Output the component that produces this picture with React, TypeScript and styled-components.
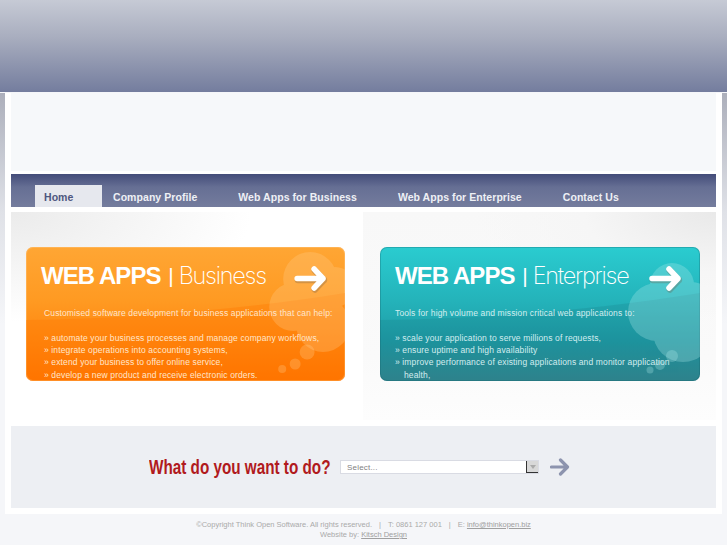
import React from "react";
import styled, { createGlobalStyle } from "styled-components";

const Global = createGlobalStyle`
  html, body { margin: 0; padding: 0; background: #f5f6f9; }
  body { font-family: "Liberation Sans", Arial, sans-serif; overflow: hidden; }
  * { box-sizing: border-box; }
`;

const Page = styled.div`
  width: 727px;
  height: 545px;
  overflow: hidden;
  display: flex;
  flex-direction: column;
`;
const Header = styled.header`
  height: 92px;
  flex: none;
  background: linear-gradient(180deg, #c6cad5 0%, #a9aebf 40%, #747d9e 100%);
`;
const Rail = styled.div`
  flex: none;
  margin-top: 1px;
  padding: 0 5px;
  background: linear-gradient(180deg, #acafbb 0%, #dfe1e7 28%, #f5f6f9 55%);
`;
const Main = styled.main`
  height: 421px;
  padding: 0 6px;
  background: #ffffff;
  display: flex;
  flex-direction: column;
`;
const Banner = styled.div`
  height: 78px;
  flex: none;
  background: #f6f8fa;
`;
const Nav = styled.nav`
  flex: none;
  height: 33px;
  margin-top: 3px;
  padding: 11px 0 0 24px;
  display: flex;
  gap: 41px;
  background: linear-gradient(180deg, #434c79 0%, #666f94 40%, #747c9d 100%);
`;
const NavItem = styled.a<{ $active?: boolean }>`
  height: 22px;
  font-size: 10.5px;
  font-weight: 700;
  line-height: 25px;
  letter-spacing: 0.06px;
  white-space: nowrap;
  color: ${(p) => (p.$active ? "#4e5780" : "#eef0f5")};
  background: ${(p) => (p.$active ? "#e6e8ee" : "transparent")};
  width: ${(p) => (p.$active ? "67px" : "auto")};
  padding-left: ${(p) => (p.$active ? "9px" : "0")};
  margin-right: ${(p) => (p.$active ? "-30px" : "0")};
`;
const Panels = styled.div`
  flex: none;
  height: 208px;
  margin-top: 5px;
  display: flex;
`;
const Panel = styled.section<{ $side: "left" | "right" }>`
  width: ${(p) => (p.$side === "left" ? "352px" : "353px")};
  padding: 35px 0 0 ${(p) => (p.$side === "left" ? "15px" : "17px")};
  background: ${(p) =>
    p.$side === "left"
      ? "radial-gradient(ellipse 240px 110px at 0 0, #ebebeb 0%, #f5f5f5 50%, #ffffff 100%)"
      : "radial-gradient(ellipse 240px 110px at 100% 0, #e9e9e9 0%, #f6f6f6 55%, rgba(255,255,255,0) 100%), linear-gradient(180deg, #f8f8f8 0%, #fafafa 70%, #fdfdfd 100%)"};
`;
const Card = styled.article<{ $tone: "orange" | "teal" }>`
  position: relative;
  overflow: hidden;
  height: 134px;
  width: ${(p) => (p.$tone === "orange" ? "319px" : "320px")};
  border-radius: 7px;
  padding: 15px 0 0 15px;
  background: ${(p) =>
    p.$tone === "orange"
      ? "linear-gradient(180deg, #ffa634 0%, #ff9a22 40%, #ff8610 70%, #ff7200 100%)"
      : "linear-gradient(180deg, #2accd0 0%, #24b3ba 40%, #1f9ca6 70%, #348891 100%)"};
  box-shadow: inset 0 0 0 1px
    ${(p) => (p.$tone === "orange" ? "rgba(255, 190, 110, 0.55)" : "rgba(20, 95, 105, 0.3)")};
`;
const Decor = styled.svg`
  position: absolute;
  inset: 0;
  width: 100%;
  height: 100%;
`;
const CardTitle = styled.h2`
  position: relative;
  margin: 0;
  height: 28px;
  color: #ffffff;
  font-size: 24px;
  line-height: 28px;
  white-space: nowrap;
  font-weight: 700;
  letter-spacing: -0.95px;
`;
const TitlePipe = styled.span`
  font-weight: 400;
  font-size: 21px;
  letter-spacing: 0;
  margin: 0 -1px 0 2px;
  position: relative;
  top: -1.5px;
`;
const TitleLight = styled.span`
  font-family: Inter, sans-serif;
  font-weight: 200;
  font-size: 23.5px;
  letter-spacing: -1.25px;
`;
const CardBody = styled.div<{ $indent: number; $color: string }>`
  position: relative;
  margin: 17px 0 0 ${(p) => p.$indent}px;
  color: ${(p) => p.$color};
  font-size: 8.5px;
  line-height: 12.3px;
  letter-spacing: 0.13px;
`;
const Lead = styled.p`
  margin: 0 0 12.5px;
  white-space: nowrap;
`;
const Points = styled.ul`
  margin: 0;
  padding: 0;
  list-style: none;
  width: 285px;
`;
const Point = styled.li`
  padding-left: 9px;
  text-indent: -9px;
  white-space: normal;
`;
const Action = styled.section`
  flex: none;
  height: 82px;
  margin-top: 6px;
  background: #edeff3;
  display: flex;
  align-items: flex-start;
  padding: 32px 0 0 138px;
`;
const QuestionSlot = styled.div`
  width: 191px;
  flex: none;
`;
const Question = styled.h3`
  margin: 0;
  width: max-content;
  color: #b11a1d;
  font-size: 19.5px;
  line-height: 18px;
  font-weight: 700;
  white-space: nowrap;
  transform: scaleX(0.783);
  transform-origin: 0 0;
`;
const Picker = styled.div`
  width: 199px;
  height: 14px;
  margin-top: 2px;
  background: #ffffff;
  border: 1px solid #d9dbe3;
  display: flex;
  align-items: center;
  justify-content: space-between;
  color: #7f7f7f;
  font-size: 8px;
  letter-spacing: 0.2px;
  padding-left: 6px;
`;
const PickerButton = styled.span`
  width: 12px;
  height: 12px;
  background: #d8d8d8;
  border-left: 1px solid #333;
  border-bottom: 1px solid #333;
  display: flex;
  align-items: center;
  justify-content: center;
`;
const GoArrow = styled.svg`
  width: 20px;
  height: 18px;
  margin: 0 0 0 11px;
  flex: none;
`;
const Footer = styled.footer`
  margin-top: 6px;
  text-align: center;
  color: #aaaaaa;
  font-size: 7.5px;
  line-height: 10px;
  white-space: nowrap;
`;
const FooterLine = styled.div``;
const Sep = styled.span`
  margin: 0 7px;
`;
const FooterLink = styled.a`
  color: #a0a0a0;
  text-decoration: underline;
`;

const Decoration = ({ tone }: { tone: "orange" | "teal" }) => {
  const gloss = tone === "orange" ? "rgba(255,120,0,0.35)" : "rgba(20,100,115,0.16)";
  const blob = tone === "orange" ? "#ffd08e" : "#b4eeee";
  const blobs =
    tone === "orange"
      ? [[285, 32, 27], [268, 60, 24], [298, 78, 27], [310, 40, 20]]
      : [[292, 38, 22], [277, 65, 29], [303, 85, 30], [312, 55, 20]];
  const bubbles =
    tone === "orange"
      ? [[282, 105, 7.5], [270, 117, 5.5], [257, 122, 4]]
      : [[292, 109, 6], [280, 118, 5], [270, 123, 3.5]];
  return (
    <Decor viewBox="0 0 320 134" preserveAspectRatio="none" aria-hidden="true">
      <path d="M0 73C110 72 220 62 320 46V134H0Z" fill={gloss} />
      <g fill={blob} opacity="0.28">
        {blobs.map(([x, y, r]) => (
          <circle key={`${x}-${y}`} cx={x} cy={y} r={r} />
        ))}
      </g>
      <g fill={blob} opacity="0.28">
        {bubbles.map(([x, y, r]) => (
          <circle key={`${x}-${y}`} cx={x} cy={y} r={r} />
        ))}
      </g>
      <path d="M272 31.5H298M289 22L298 31.5L289 41" fill="none" stroke="rgba(110,90,70,.3)" strokeWidth="6.5" strokeLinecap="round" strokeLinejoin="round" transform="translate(0.8 1.5)" />
      <path d="M272 31.5H298M289 22L298 31.5L289 41" fill="none" stroke="#ffffff" strokeWidth="5.5" strokeLinecap="round" strokeLinejoin="round" />
    </Decor>
  );
};

export default function App() {
  return (
    <Page>
      <Global />
      <Header />
      <Rail>
        <Main>
          <Banner />
          <Nav>
            <NavItem $active>Home</NavItem>
            <NavItem>Company Profile</NavItem>
            <NavItem>Web Apps for Business</NavItem>
            <NavItem>Web Apps for Enterprise</NavItem>
            <NavItem>Contact Us</NavItem>
          </Nav>
          <Panels>
            <Panel $side="left">
              <Card $tone="orange">
                <Decoration tone="orange" />
                <CardTitle>
                  WEB APPS<TitlePipe> | </TitlePipe><TitleLight>Business</TitleLight>
                </CardTitle>
                <CardBody $indent={3} $color="#ffe6cc">
                  <Lead>Customised software development for business applications that can help:</Lead>
                  <Points>
                    <Point>» automate your business processes and manage company workflows,</Point>
                    <Point>» integrate operations into accounting systems,</Point>
                    <Point>» extend your business to offer online service,</Point>
                    <Point>» develop a new product and receive electronic orders.</Point>
                  </Points>
                </CardBody>
              </Card>
            </Panel>
            <Panel $side="right">
              <Card $tone="teal">
                <Decoration tone="teal" />
                <CardTitle>
                  WEB APPS<TitlePipe> | </TitlePipe><TitleLight>Enterprise</TitleLight>
                </CardTitle>
                <CardBody $indent={0} $color="#d3edef">
                  <Lead>Tools for high volume and mission critical web applications to:</Lead>
                  <Points>
                    <Point>» scale your application to serve millions of requests,</Point>
                    <Point>» ensure uptime and high availability</Point>
                    <Point>» improve performance of existing applications and monitor application health,</Point>
                  </Points>
                </CardBody>
              </Card>
            </Panel>
          </Panels>
          <Action>
            <QuestionSlot>
              <Question>What do you want to do?</Question>
            </QuestionSlot>
            <Picker>
              Select...
              <PickerButton>
                <svg width="6" height="4" viewBox="0 0 6 4" aria-hidden="true">
                  <path d="M0 0H6L3 4Z" fill="#aaa" />
                </svg>
              </PickerButton>
            </Picker>
            <GoArrow viewBox="0 0 20 18" aria-hidden="true">
              <path d="M1.5 9H17M10.5 2L17.5 9L10.5 16" fill="none" stroke="#8d94ae" strokeWidth="3.2" strokeLinecap="round" strokeLinejoin="round" />
            </GoArrow>
          </Action>
        </Main>
      </Rail>
      <Footer>
        <FooterLine>
          ©Copyright Think Open Software. All rights reserved.
          <Sep>|</Sep>T: 0861 127 001<Sep>|</Sep>E: <FooterLink>info@thinkopen.biz</FooterLink>
        </FooterLine>
        <FooterLine>
          Website by: <FooterLink>Kitsch Design</FooterLink>
        </FooterLine>
      </Footer>
    </Page>
  );
}
